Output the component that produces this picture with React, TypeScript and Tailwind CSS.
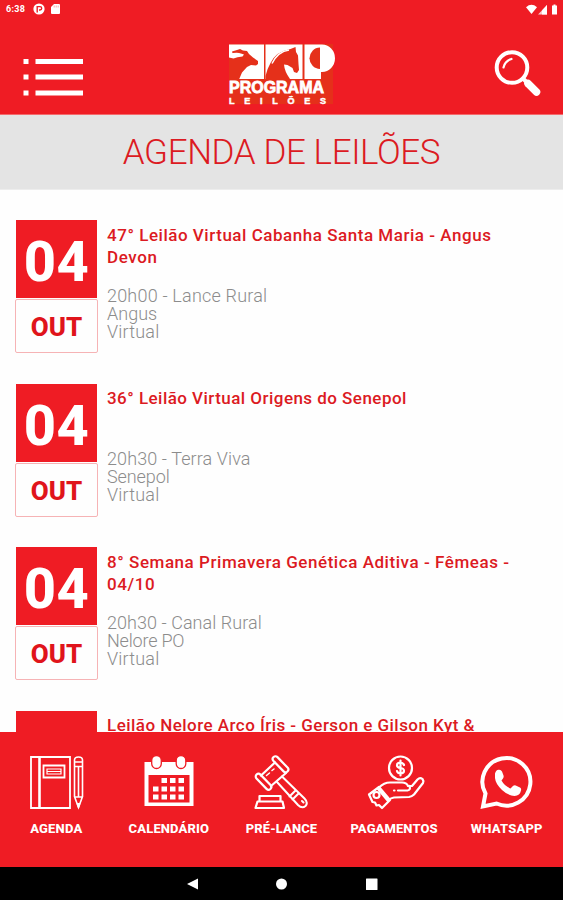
import type { ReactNode } from "react"

interface Auction {
  day?: string
  month?: string
  title: { text: string; className: string }[]
  details: { text: string; className: string }[]
}

const auctions: Auction[] = [
  {
    day: "04",
    month: "OUT",
    title: [
      { text: "47° Leilão Virtual Cabanha Santa Maria - Angus", className: "tracking-[0.53px]" },
      { text: "Devon", className: "tracking-[0.6px]" },
    ],
    details: [
      { text: "20h00 - Lance Rural", className: "tracking-[0.2px]" },
      { text: "Angus", className: "tracking-normal" },
      { text: "Virtual", className: "tracking-[0.2px]" },
    ],
  },
  {
    day: "04",
    month: "OUT",
    title: [{ text: "36° Leilão Virtual Origens do Senepol", className: "tracking-[0.46px]" }],
    details: [
      { text: "20h30 - Terra Viva", className: "tracking-[0.1px]" },
      { text: "Senepol", className: "tracking-[-0.1px]" },
      { text: "Virtual", className: "tracking-[0.2px]" },
    ],
  },
  {
    day: "04",
    month: "OUT",
    title: [
      { text: "8° Semana Primavera Genética Aditiva - Fêmeas -", className: "tracking-[0.55px]" },
      { text: "04/10", className: "tracking-[0.6px]" },
    ],
    details: [
      { text: "20h30 - Canal Rural", className: "tracking-[0.05px]" },
      { text: "Nelore PO", className: "tracking-[-0.2px]" },
      { text: "Virtual", className: "tracking-[0.2px]" },
    ],
  },
  {
    title: [{ text: "Leilão Nelore Arco Íris - Gerson e Gilson Kyt &", className: "tracking-[0.46px]" }],
    details: [],
  },
]

function StatusBar() {
  return (
    <div className="flex h-[18px] items-center justify-between pl-[6px] pr-[5px] text-white">
      <div className="flex items-center">
        <span className="w-[27px] text-[9px] font-bold leading-none tracking-[0.3px]">6:38</span>
        <svg className="size-3" viewBox="0 0 12 12">
          <circle cx="6" cy="6" r="5.6" fill="#fff" />
          <path d="M4.200 9.500V3.600H7a1.700 1.700 0 0 1 0 3.400H6" fill="none" stroke="#ef1c24" strokeWidth="1.400" />
        </svg>
        <svg className="ml-[6px] h-[10px] w-[9px]" viewBox="0 0 9 10">
          <path d="M3 0h5a1 1 0 0 1 1 1v8a1 1 0 0 1-1 1H1a1 1 0 0 1-1-1V3z" fill="#fff" />
          <path d="M3.200 1.500v2M5.200 1.500v2M7.200 1.500v2" stroke="#ef1c24" strokeWidth=".6" opacity=".6" />
        </svg>
      </div>
      <svg className="h-[11px] w-8" viewBox="0 0 32 11" fill="#fff">
        <path d="M0 3.200Q5.500-1.600 11 3.200L5.500 10z" />
        <path d="M12 10.500L21 1v9.500z" opacity=".75" />
        <path d="M16 10.500V6.500L21 1v9.500z" />
        <path d="M26 1.500h1.500V.5h2v1H31V10.500h-5z" />
      </svg>
    </div>
  )
}

function Logo() {
  return (
    <svg className="h-[62px] w-[108px]" viewBox="0 0 108 62">
      <rect x="1" y="1" width="104" height="60" fill="#e5301a" />
      {/* bull */}
      <path d="M1 1.500h35V36H1z" fill="#fff" />
      <path
        d="M1 14L5 12 4 8.500l5-1.500 3-1 3 1.500 4 .5 2 3 4 3.500 5 3.500 0 3-2 1.500-5-.5-4 2-5 5.500-3 7H1z"
        fill="#e5301a"
      />
      <path d="M1 10.500q7-1 10-.5t5 1.500l-1.500 2-5 .8-4 1.200L1 14.500z" fill="#fff" />
      {/* horse */}
      <path d="M37.500 1.500h37V36h-37z" fill="#fff" />
      <path
        d="M37.500 36V33q2-8 5-13 6-12 20-14l5-2 .5 5 2 3.500.5 8.500.5 6-2 3-3-1-1.500-4-5-3-3.500-.5q.5 7 6 14.500z"
        fill="#e5301a"
      />
      <path d="M44 20.500Q50 8.500 61 7" fill="none" stroke="#fff" strokeWidth="1.500" />
      {/* P */}
      <path d="M76.500 1.500h17.500a13 13.700 0 0 1 0 27.400H93V36H76.500z" fill="#fff" />
      <path d="M92 4.500v21.500a10.500 10.750 0 0 1 0-21.500z" fill="#e5301a" />
      <text
        x="1"
        y="49.700"
        textLength="95"
        lengthAdjust="spacingAndGlyphs"
        fill="#fff"
        className="font-['Liberation_Sans',sans-serif] text-[16.5px] font-bold"
        stroke="#fff"
        strokeWidth=".8"
      >
        PROGRAMA
      </text>
      <text
        x="1"
        y="60.500"
        textLength="97"
        fill="#fff"
        className="font-['Liberation_Sans',sans-serif] text-[9px] font-bold"
        stroke="#fff"
        strokeWidth=".5"
      >
        LEILÕES
      </text>
    </svg>
  )
}

function Header() {
  return (
    <header className="h-[115px] shrink-0 border-b border-[#f4696c] bg-[#ef1c24]">
      <StatusBar />
      <div className="flex items-start pl-[23px] pt-[25px]">
        <svg className="mt-[15px] h-[40px] w-[62px]" viewBox="0 0 62 40" fill="#fff">
          <path d="M.5 1h5v5h-5zM12.500 1H60v5H12.500zM.5 16.500h5v5h-5zM12.500 16.500H60v5H12.500zM.5 32.500h5v5h-5zM12.500 32.500H60v5H12.500z" />
        </svg>
        <div className="ml-[143px]">
          <Logo />
        </div>
        <svg className="ml-[158px] mt-[6px] size-[50px]" viewBox="0 0 50 50" fill="none" stroke="#fff">
          <circle cx="18" cy="18.500" r="15.300" strokeWidth="4" />
          <path d="M9.500 18.500Q11 12 17.500 10" strokeWidth="2.200" strokeLinecap="round" />
          <path d="M29.500 30l4 4" strokeWidth="4" />
          <path d="M34 34.500l8.500 8.500" strokeWidth="7.500" strokeLinecap="round" />
        </svg>
      </div>
    </header>
  )
}

function AuctionRow({ day, month, title, details }: Auction) {
  return (
    <li className="mx-[15px] flex h-[163.5px] shrink-0">
      <div className="w-[83px]">
        <div className="mx-px flex h-[78px] items-center justify-center bg-[#ef1c24] pt-[6px] text-[56px] font-extrabold leading-none tracking-[0.5px] text-white">
          {day}
        </div>
        {month && (
          <div className="mt-px flex h-[54px] items-center justify-center rounded-[2px] border border-[#f6b3b5] pt-[2px] text-[26px] font-extrabold leading-none text-[#e0141b]">
            {month}
          </div>
        )}
      </div>
      <div className="pl-[9px] pt-[3.5px]">
        <h2 className="h-[63px] text-[17px] font-medium leading-[22.5px] text-[#dc1a22]">
          {title.map((line) => (
            <span key={line.text} className={`block whitespace-nowrap ${line.className}`}>
              {line.text}
            </span>
          ))}
        </h2>
        <div className="text-[18px] font-light leading-[18px] text-[#8c8c8c]">
          {details.map((line) => (
            <p key={line.text} className={`whitespace-nowrap ${line.className}`}>
              {line.text}
            </p>
          ))}
        </div>
      </div>
    </li>
  )
}

function AgendaIcon() {
  return (
    <svg className="size-14" viewBox="0 0 56 56" fill="none" stroke="#fff" strokeWidth="1.800">
      <path d="M3 3h39v51H3zM15.500 11.500h21v12h-21z" />
      <path d="M19 15h14v5H19zM19 17.500h14" strokeWidth="1.200" />
      <path d="M11.500 3v51" strokeWidth="2.600" />
      <path d="M46.500 9.500V6q0-3 4-3t4 3v36.500l-4 11-4-11zM46.500 8h8M46.500 12.500h8M46.500 43h8M50.500 13v30" strokeWidth="1.600" />
      <path d="M49 49.500h3L50.500 54z" fill="#fff" strokeWidth="1" />
    </svg>
  )
}

function CalendarIcon() {
  return (
    <svg className="size-14" viewBox="0 0 56 56" fill="#fff">
      <path fillRule="evenodd" d="M3.500 8h49v44h-49zM7.500 21v27.500h41V21z" />
      <g stroke="#ef1c24" strokeWidth="1.300">
        <rect x="10.700" y="1.500" width="9.600" height="13" rx="4.800" />
        <rect x="35.200" y="1.500" width="9.600" height="13" rx="4.800" />
      </g>
      <path d="M20.500 24H26v5h-5.500zM29 24h5.500v5H29zM37.500 24H43v5h-5.500zM12 32.500h5.500v5H12zM20.500 32.500H26v5h-5.500zM29 32.500h5.500v5H29zM37.500 32.500H43v5h-5.500zM12 40.500h5.500v5H12zM20.500 40.500H26v5h-5.500zM29 40.500h5.500v5H29zM37.500 40.500H43v5h-5.500z" />
    </svg>
  )
}

function GavelIcon() {
  return (
    <svg
      className="size-14"
      viewBox="0 0 56 56"
      fill="none"
      stroke="#fff"
      strokeWidth="2.200"
      strokeLinejoin="round"
      strokeLinecap="round"
    >
      <rect x="17.500" y="7.500" width="20" height="5.500" rx="2.750" transform="rotate(46 27.500 10.250)" />
      <rect x="0.500" y="25" width="20" height="5.500" rx="2.750" transform="rotate(46 10.500 27.750)" />
      <path d="M22 8.500L8 21.500M33 19L18 32" />
      <path d="M13.500 21.500l3-2.500M19 16.500l2-1.500" strokeWidth="1.500" />
      <path d="M29 22.500l22.500 22q4 4 1 7.500-3.500 3-7.500-1L24 28M42.500 36.500l-6 6M45.500 39.500l-6 6M49 47l1.500 1.500" strokeWidth="2" />
      <path d="M6.500 42h21v5.500h-21zM4.500 47.500h25L31 54H2.500z" />
    </svg>
  )
}

function PaymentIcon() {
  return (
    <svg
      className="size-14 overflow-visible"
      viewBox="0 0 56 56"
      fill="none"
      stroke="#fff"
      strokeWidth="2.200"
      strokeLinejoin="round"
      strokeLinecap="round"
    >
      <circle cx="34.500" cy="14" r="11.500" />
      <path
        d="M38 11q-1-2.500-3.500-2.500-3.500 0-3.500 2.700 0 2.300 3.500 2.800t3.500 2.800q0 2.700-3.500 2.700-2.800 0-3.500-2.500M34.500 6.500v15"
        strokeWidth="2.200"
      />
      <path d="M13 33.500q5-5 11-5h12q4.500 0 6 3.500h4l5.500-6.500q2.500-2.500 5-.5 1.500 2 .5 4L48 40.500q-2 2-5 2.500l-15 .5q-3 .5-5.500 2.500" />
      <path d="M28 36.500h.5M32 36.500h9.500q3.500-.5 2-4.500" />
      <path d="M3 40.500L13 33l11 13-8 8-3-3-2.500.5-1.500-3-2.500-.5zM12 35l10 12" />
      <circle cx="10.500" cy="41" r="3" />
    </svg>
  )
}

function WhatsAppIcon() {
  return (
    <svg className="size-14" viewBox="0 0 56 56">
      <path
        d="M6.500 39.500A24 23.800 0 1 1 17.500 49.500L4 52.500z"
        fill="none"
        stroke="#fff"
        strokeWidth="4"
        strokeLinejoin="miter"
      />
      <path
        d="M16 19.500q1-3.500 3.500-3.700 2.500-.4 3.500 1.800l1.500 4q.5 1.500-.5 2.800l-1.500 2q3 5.500 9 8l2.700-2.600q1.200-1 2.500-.4l4.300 2q1.500.8 1 3-1 5-6.500 5.500-6 0-12.500-6T16 24z"
        fill="#fff"
      />
    </svg>
  )
}

const tabs: { label: string; className: string; icon: ReactNode }[] = [
  { label: "AGENDA", className: "tracking-[0.2px]", icon: <AgendaIcon /> },
  { label: "CALENDÁRIO", className: "tracking-[0.15px]", icon: <CalendarIcon /> },
  { label: "PRÉ-LANCE", className: "tracking-[0.1px]", icon: <GavelIcon /> },
  { label: "PAGAMENTOS", className: "tracking-[0.1px]", icon: <PaymentIcon /> },
  { label: "WHATSAPP", className: "tracking-[0.2px]", icon: <WhatsAppIcon /> },
]

export default function App() {
  return (
    <div className="flex h-[900px] w-[563px] flex-col overflow-hidden bg-[#fefefe] font-['Roboto',sans-serif]">
      <Header />

      <div className="flex h-[75px] shrink-0 items-center justify-center border-b border-[#ededed] bg-[#e4e4e4]">
        <h1 className="text-[35px] font-light leading-none tracking-[-0.4px] text-[#dc1a22]">AGENDA DE LEILÕES</h1>
      </div>

      <ul className="flex min-h-0 flex-1 flex-col overflow-hidden pt-[30px]">
        {auctions.map((auction, i) => (
          <AuctionRow key={i} {...auction} />
        ))}
      </ul>

      <nav className="grid h-[135.5px] shrink-0 grid-cols-5 bg-[#ef1c24] pt-[22.5px]">
        {tabs.map((tab) => (
          <div key={tab.label} className="flex flex-col items-center">
            {tab.icon}
            <span className={`mt-[11px] text-[13px] font-extrabold leading-[15px] text-white ${tab.className}`}>
              {tab.label}
            </span>
          </div>
        ))}
      </nav>

      {/* Android navigation buttons */}
      <div className="flex h-[33px] shrink-0 items-center justify-center bg-black">
        <svg className="ml-[2px] h-3 w-[192px]" viewBox="0 0 192 12" fill="#fff">
          <path d="M0 6l11-5.500v11z" />
          <circle cx="94.500" cy="6" r="5.500" />
          <rect x="179" y="0.500" width="11.500" height="11.500" rx="0.500" />
        </svg>
      </div>
    </div>
  )
}
